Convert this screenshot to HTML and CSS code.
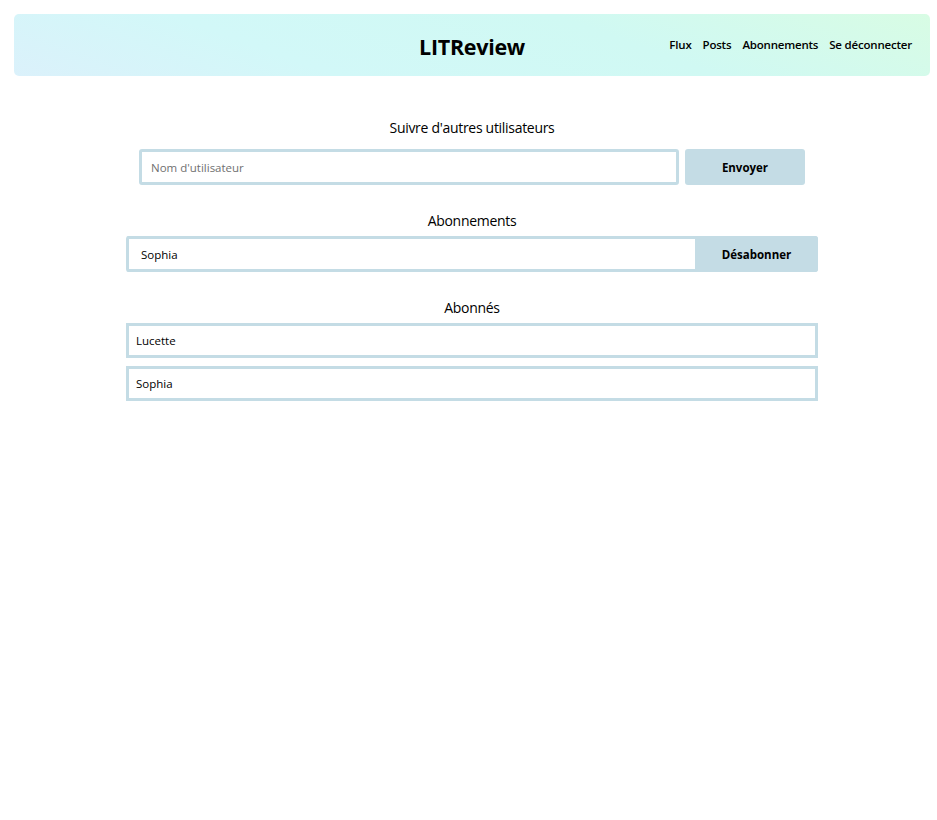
FILE: index.html
```html
<!DOCTYPE html>
<html lang="fr">
<head>
<meta charset="utf-8">
<title>LITReview - Abonnements</title>
<link rel="stylesheet" href="styles.css">
</head>
<body>
<header class="topbar">
  <div class="topbar-side"></div>
  <h1 class="brand">LITReview</h1>
  <nav class="nav">
    <a href="#">Flux</a>
    <a href="#">Posts</a>
    <a href="#">Abonnements</a>
    <a href="#">Se déconnecter</a>
  </nav>
</header>
<main class="content">
  <section class="section">
    <h2 class="section-title section-title-wide">Suivre d'autres utilisateurs</h2>
    <form class="follow-form">
      <input class="follow-input" type="text" placeholder="Nom d'utilisateur">
      <button class="btn" type="button">Envoyer</button>
    </form>
  </section>
  <section class="section">
    <h2 class="section-title">Abonnements</h2>
    <div class="sub-row">
      <span class="sub-name">Sophia</span>
      <button class="btn btn-unsub" type="button">Désabonner</button>
    </div>
  </section>
  <section class="section">
    <h2 class="section-title">Abonnés</h2>
    <ul class="followers">
      <li class="follower">Lucette</li>
      <li class="follower">Sophia</li>
    </ul>
  </section>
</main>
</body>
</html>
```

FILE: styles.css
```css
* { box-sizing: border-box; }
html, body { margin: 0; }
body {
  padding: 14px 7px 14px 14px;
  font-family: "Open Sans", "Noto Sans", sans-serif;
  color: #000;
  background: #fff;
}
.topbar {
  height: 62px;
  border-radius: 5px;
  background: linear-gradient(200deg, #d8fce4 0%, #d0f9f3 35%, #d2f8f8 70%, #dbf1fb 100%);
  display: grid;
  grid-template-columns: 1fr auto 1fr;
  align-items: center;
}
.brand {
  margin: 0;
  padding-top: 2px;
  font-size: 21.5px;
  font-weight: 700;
  letter-spacing: -0.3px;
}
.nav {
  justify-self: end;
  display: flex;
  gap: 11px;
  padding-right: 18px;
  padding-bottom: 1px;
}
.nav a {
  color: #000;
  text-decoration: none;
  font-size: 11.5px;
  font-weight: 600;
  letter-spacing: -0.2px;
}
.content {
  width: 692px;
  margin: 42px auto 0;
  display: flex;
  flex-direction: column;
  gap: 26px;
}
.section {
  display: flex;
  flex-direction: column;
  align-items: center;
}
.section-title {
  margin: 0 0 5px;
  font-size: 14px;
  line-height: 20px;
  font-weight: 400;
  letter-spacing: -0.3px;
}
.section-title-wide { margin-bottom: 11px; }
.follow-form {
  display: flex;
  gap: 6px;
  width: 666px;
}
.follow-input {
  flex: 1;
  height: 36px;
  border: 3px solid #c4dce5;
  border-radius: 3px;
  padding: 0 9px;
  font-family: inherit;
  font-size: 11.5px;
  outline: none;
}
.follow-input::placeholder { color: #707070; }
.btn {
  width: 120px;
  height: 36px;
  border: 0;
  border-radius: 3px;
  background: #c4dce5;
  font-family: inherit;
  font-size: 11.5px;
  font-weight: 700;
  color: #000;
}
.sub-row {
  width: 100%;
  height: 36px;
  display: flex;
  align-items: stretch;
  border: 3px solid #c4dce5;
  border-right: 0;
  border-radius: 3px;
}
.sub-name {
  flex: 1;
  display: flex;
  align-items: center;
  padding-left: 12px;
  font-size: 11.5px;
}
.btn-unsub {
  width: 123px;
  height: auto;
  margin: -3px 0;
  border-radius: 0 3px 3px 0;
}
.followers {
  list-style: none;
  margin: 0;
  padding: 0;
  width: 100%;
  display: flex;
  flex-direction: column;
  gap: 8px;
}
.follower {
  height: 35px;
  border: 3px solid #c4dce5;
  display: flex;
  align-items: center;
  padding-left: 7px;
  font-size: 11.5px;
}
```
